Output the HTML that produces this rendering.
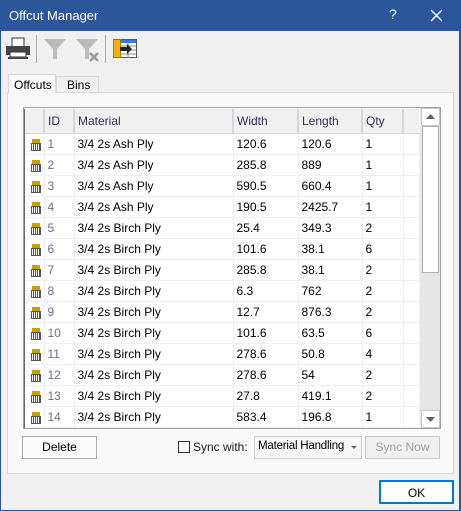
<!DOCTYPE html>
<html><head><style>
*{box-sizing:border-box;margin:0;padding:0}
body{width:461px;height:511px;background:#2b579a;font-family:"Liberation Sans",sans-serif;font-size:12px;color:#000;position:relative;overflow:hidden}
.win{position:absolute;left:1px;top:31px;width:458px;height:479px;background:#f0f0f0}
.abs{position:absolute}
.title{position:absolute;left:9px;top:8px;color:#fff;font-size:13px}
.btn{position:absolute;border:1px solid #adadad;background:#fbfbfb;text-align:center;line-height:20px}
table{border-collapse:collapse;table-layout:fixed}
td{height:21px;border-right:1px solid #f0f0f0;border-bottom:1px solid #f0f0f0;padding-left:3px;white-space:nowrap;overflow:hidden}
th{height:24px;font-weight:normal;text-align:left;padding-left:3px;background:#f0f0f0;border-right:2px solid #d6d6d6;border-bottom:1px solid #d6d6d6;color:#2e2e5a}
td.id{color:#6d6d8a}
.ic{position:relative;padding:0}
.ic i{position:absolute;left:8px;top:5px;width:8px;height:4px;background:#c8a000}
.ic b{position:absolute;left:7px;top:9px;width:10px;height:8px;border:1px solid #555;background:repeating-linear-gradient(90deg,#fff 0 1px,#555 1px 2px)}
</style></head><body>
<div class="title">Offcut Manager</div>
<div class="abs" style="left:389px;top:6px;color:#fff;font-size:14px">?</div>
<svg class="abs" style="left:430px;top:9px" width="13" height="13"><path d="M1 1L12 12M12 1L1 12" stroke="#fff" stroke-width="1.4"/></svg>
<div class="win">
 <svg class="abs" style="left:4px;top:6px" width="26" height="24"><rect x="7" y="1" width="12" height="9" fill="#fff" stroke="#333"/><rect x="1" y="9" width="24" height="9" fill="#444"/><rect x="5" y="15" width="16" height="5" fill="#fff" stroke="#333"/><rect x="3" y="20" width="20" height="2" fill="#444"/></svg>
 <div class="abs" style="left:35px;top:4px;width:1px;height:28px;background:#aaa"></div>
 <svg class="abs" style="left:42px;top:6px" width="24" height="24"><path d="M1 2H23L14 12V22H10V12Z" fill="#bbb"/></svg>
 <svg class="abs" style="left:74px;top:6px" width="26" height="26"><path d="M1 2H23L14 12V22H10V12Z" fill="#bbb"/><path d="M15 16L23 24M23 16L15 24" stroke="#999" stroke-width="2.5"/></svg>
 <div class="abs" style="left:104px;top:4px;width:1px;height:28px;background:#aaa"></div>
 <svg class="abs" style="left:112px;top:8px" width="24" height="20"><rect x="0.5" y="0.5" width="23" height="18" fill="#fff" stroke="#555"/><rect x="0.5" y="0.5" width="7" height="18" fill="#f0b400" stroke="#a07800"/><rect x="8" y="1" width="15" height="3" fill="#2c7be5"/><path d="M8 7H23M8 11H23M8 15H23M15 4V19" stroke="#888"/><path d="M7 8H14V5L19 10L14 15V12H7Z" fill="#222"/></svg>
 <div class="abs" style="left:6px;top:61px;width:447px;height:382px;border:1px solid #d9d9d9;background:#f9f9f9"></div>
 <div class="abs" style="left:7px;top:43px;width:48px;height:19px;border:1px solid #d9d9d9;border-bottom:none;background:#f9f9f9;padding:3px 0 0 5px">Offcuts</div>
 <div class="abs" style="left:55px;top:45px;width:43px;height:16px;border:1px solid #d9d9d9;border-bottom:none;background:#f0f0f0;padding:1px 0 0 10px">Bins</div>
 <div class="abs" style="left:22px;top:76px;width:418px;height:322px;border:1px solid #a0a0a0;background:#fff;overflow:hidden">
  <div class="abs" style="left:0px;top:1px;width:1px;height:320px;background:#696969;z-index:2"></div>
  <table class="abs" style="left:0px;top:1px;width:395px">
   <colgroup><col style="width:20px"><col style="width:30px"><col style="width:159px"><col style="width:65px"><col style="width:64px"><col style="width:41px"><col style="width:16px"></colgroup>
   <tr><th></th><th>ID</th><th>Material</th><th>Width</th><th>Length</th><th>Qty</th><th style="border-right:none"></th></tr>
   <tr><td class="ic"><i></i><b></b></td><td class="id">1</td><td>3/4 2s Ash Ply</td><td>120.6</td><td>120.6</td><td>1</td><td></td></tr>
   <tr><td class="ic"><i></i><b></b></td><td class="id">2</td><td>3/4 2s Ash Ply</td><td>285.8</td><td>889</td><td>1</td><td></td></tr>
   <tr><td class="ic"><i></i><b></b></td><td class="id">3</td><td>3/4 2s Ash Ply</td><td>590.5</td><td>660.4</td><td>1</td><td></td></tr>
   <tr><td class="ic"><i></i><b></b></td><td class="id">4</td><td>3/4 2s Ash Ply</td><td>190.5</td><td>2425.7</td><td>1</td><td></td></tr>
   <tr><td class="ic"><i></i><b></b></td><td class="id">5</td><td>3/4 2s Birch Ply</td><td>25.4</td><td>349.3</td><td>2</td><td></td></tr>
   <tr><td class="ic"><i></i><b></b></td><td class="id">6</td><td>3/4 2s Birch Ply</td><td>101.6</td><td>38.1</td><td>6</td><td></td></tr>
   <tr><td class="ic"><i></i><b></b></td><td class="id">7</td><td>3/4 2s Birch Ply</td><td>285.8</td><td>38.1</td><td>2</td><td></td></tr>
   <tr><td class="ic"><i></i><b></b></td><td class="id">8</td><td>3/4 2s Birch Ply</td><td>6.3</td><td>762</td><td>2</td><td></td></tr>
   <tr><td class="ic"><i></i><b></b></td><td class="id">9</td><td>3/4 2s Birch Ply</td><td>12.7</td><td>876.3</td><td>2</td><td></td></tr>
   <tr><td class="ic"><i></i><b></b></td><td class="id">10</td><td>3/4 2s Birch Ply</td><td>101.6</td><td>63.5</td><td>6</td><td></td></tr>
   <tr><td class="ic"><i></i><b></b></td><td class="id">11</td><td>3/4 2s Birch Ply</td><td>278.6</td><td>50.8</td><td>4</td><td></td></tr>
   <tr><td class="ic"><i></i><b></b></td><td class="id">12</td><td>3/4 2s Birch Ply</td><td>278.6</td><td>54</td><td>2</td><td></td></tr>
   <tr><td class="ic"><i></i><b></b></td><td class="id">13</td><td>3/4 2s Birch Ply</td><td>27.8</td><td>419.1</td><td>2</td><td></td></tr>
   <tr><td class="ic"><i></i><b></b></td><td class="id">14</td><td>3/4 2s Birch Ply</td><td>583.4</td><td>196.8</td><td>1</td><td></td></tr>
  </table>
  <div class="abs" style="left:396px;top:0;width:20px;height:320px;background:#e6e6e6;border-left:1px solid #e6e6e6">
   <div class="abs" style="left:0;top:0;width:19px;height:18px;background:#fff;border:1px solid #c8c8c8"></div>
   <svg class="abs" style="left:5px;top:6px" width="9" height="5"><path d="M0 5L4.5 0L9 5Z" fill="#606060"/></svg>
   <div class="abs" style="left:1px;top:18px;width:17px;height:147px;background:#fff;border:1px solid #b0b0b0"></div>
   <div class="abs" style="left:0;top:302px;width:19px;height:18px;background:#fff;border:1px solid #c8c8c8"></div>
   <svg class="abs" style="left:5px;top:309px" width="9" height="5"><path d="M0 0L4.5 5L9 0Z" fill="#606060"/></svg>
  </div>
 </div>
 <div class="btn" style="left:21px;top:405px;width:75px;height:23px;line-height:21px">Delete</div>
 <div class="abs" style="left:177px;top:410px;width:12px;height:12px;border:1px solid #333;background:#fff"></div>
 <div class="abs" style="left:192px;top:409px;color:#222">Sync with:</div>
 <div class="abs" style="left:253px;top:405px;width:108px;height:23px;border:1px solid #d0d0d0;background:#f7f7f7;padding:3px 0 0 3px;font-size:11.5px;letter-spacing:-0.2px">Material Handling</div>
 <svg class="abs" style="left:350px;top:415px" width="6" height="3"><path d="M0 0H6L3 3Z" fill="#666"/></svg>
 <div class="btn" style="left:364px;top:405px;width:75px;height:23px;line-height:21px;color:#a0a0a0;background:#f0f0f0;border-color:#c8c8c8">Sync Now</div>
 <div class="btn" style="left:378px;top:449px;width:75px;height:24px;line-height:22px;border:2px solid #0078d7;background:#fff">OK</div>
</div>
</body></html>
